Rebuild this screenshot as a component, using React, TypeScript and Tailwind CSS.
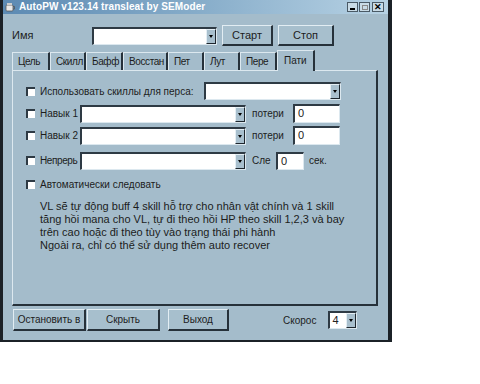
import React from "react";

const FONT = "font-['Liberation_Sans',Arial,sans-serif]";

/**
 * Combo box with the classic drop arrow
 */
const Combo = ({ className, value }: { className: string; value?: string }) => (
  <div
    className={`flex shrink-0 bg-white border-t-2 border-l-2 border-t-[#2e3a44] border-l-[#2e3a44] border-b border-r border-b-[#dce8ef] border-r-[#dce8ef] ${className}`}
  >
    <div className="flex-1 pl-[2px] text-[11px] leading-[14px] text-[#222]">{value}</div>
    <div className="w-[10px] flex items-center justify-center bg-[#a9c0ce] border-t border-l border-t-[#e4eef4] border-l-[#e4eef4] border-b border-r border-b-[#1e262d] border-r-[#1e262d]">
      <div className="w-0 h-0 border-l-[2.5px] border-r-[2.5px] border-t-[3px] border-l-transparent border-r-transparent border-t-black" />
    </div>
  </div>
);

const Field = ({ className, value }: { className: string; value: string }) => (
  <div
    className={`shrink-0 bg-white border-t-2 border-l-2 border-t-[#2e3a44] border-l-[#2e3a44] border-b border-r border-b-[#dce8ef] border-r-[#dce8ef] pl-[3px] text-[11px] leading-[14px] text-[#222] ${className}`}
  >
    {value}
  </div>
);

const Check = () => (
  <div className="w-[9px] h-[9px] bg-white border-t-2 border-l-2 border-t-[#2e3a44] border-l-[#2e3a44] shrink-0" />
);

const Btn = ({ className, children }: { className: string; children: React.ReactNode }) => (
  <div
    className={`flex shrink-0 items-center justify-center whitespace-nowrap text-[10px] text-[#1c1c1c] bg-[#a7bfcd] border-t border-l border-t-[#e2edf3] border-l-[#e2edf3] border-b-2 border-r-2 border-b-[#26313a] border-r-[#26313a] ${className}`}
  >
    {children}
  </div>
);

const TABS = ["Цель", "Скилл", "Бафф", "Восстан", "Пет", "Лут", "Пере"];
const TAB_W = ["w-[38px]", "w-[36px]", "w-[37px]", "w-[45px]", "w-[36px]", "w-[36px]", "w-[37px]"];

export default function App() {
  return (
    <div className={`w-[480px] h-[384px] bg-white ${FONT}`}>
      <div className="w-[392px] h-[342px] flex flex-col bg-[#a4bccb] border-l-[3px] border-r-[4px] border-b-2 border-[#1b2127]">
        {/* title bar */}
        <div className="h-[14px] flex items-center bg-gradient-to-r from-[#5c8ab3] via-[#86acc9] to-[#b7d2e4] pl-[2px] pr-[4px]">
          <svg width="11" height="10" viewBox="0 0 11 10" className="shrink-0">
            <rect x="1" y="3" width="7" height="6" rx="1" fill="#e8e8e8" stroke="#555" strokeWidth="0.8" />
            <path d="M8 4.5 h1.5 v2.5 h-1.5" fill="none" stroke="#555" strokeWidth="0.8" />
            <rect x="2" y="1" width="5" height="2" fill="#ccc" />
          </svg>
          <span className="ml-[3px] text-[10px] font-bold text-white tracking-[0.1px] leading-none whitespace-nowrap">
            AutoPW v123.14 transleat by SEModer
          </span>
          <div className="ml-auto flex gap-[1px]">
            <div className="w-[11px] h-[10px] bg-[#c9dbe6] border border-[#4a5a66] flex items-end justify-center pb-[1px]">
              <div className="w-[5px] h-[2px] bg-black" />
            </div>
            <div className="w-[11px] h-[10px] bg-[#c9dbe6] border border-[#4a5a66] flex items-center justify-center">
              <div className="w-[6px] h-[5px] border border-[#888]" />
            </div>
            <div className="w-[12px] h-[10px] ml-[1px] bg-[#c9dbe6] border border-[#4a5a66] flex items-center justify-center text-[9px] font-bold leading-none text-black">
              ✕
            </div>
          </div>
        </div>

        {/* name row */}
        <div className="flex items-center mt-[11px] pl-[9px] h-[21px] whitespace-nowrap">
          <span className="w-[80px] text-[11px] text-[#1c1c1c]">Имя</span>
          <Combo className="w-[125px] h-[18px]" />
          <Btn className="w-[51px] h-[21px] ml-[5px] text-[11px]">Старт</Btn>
          <Btn className="w-[56px] h-[21px] ml-[5px] text-[11px]">Стоп</Btn>
        </div>

        {/* tabs */}
        <div className="flex items-end mt-[3px] ml-[9px] h-[21px] whitespace-nowrap">
          {TABS.map((t, i) => (
            <div
              key={t}
              className={`${TAB_W[i]} h-[18px] flex items-center pl-[5px] text-[10px] tracking-[-0.4px] text-[#1c1c1c] border-t border-l border-t-[#dce8ef] border-l-[#dce8ef] border-r-2 border-r-[#26313a] overflow-hidden`}
            >
              {t}
            </div>
          ))}
          <div className="w-[38px] h-[21px] flex items-center pl-[6px] pb-[2px] text-[10px] text-[#1c1c1c] border-t border-l border-t-[#dce8ef] border-l-[#dce8ef] border-r-2 border-r-[#26313a] -mb-[1px] bg-[#a4bccb] relative">
            Пати
          </div>
        </div>

        {/* tab panel */}
        <div className="ml-[9px] w-[366px] h-[236px] border-t border-l border-t-[#dce8ef] border-l-[#dce8ef] border-b-2 border-r-2 border-b-[#26313a] border-r-[#26313a] pl-[13px] pt-[11px] text-[10px] text-[#1c1c1c] whitespace-nowrap">
          <div className="flex items-center h-[18px]">
            <Check />
            <span className="ml-[5px] w-[164px] shrink-0">Использовать скиллы для перса:</span>
            <Combo className="w-[137px] h-[18px]" />
          </div>
          <div className="flex items-center h-[19px] mt-[4px]">
            <Check />
            <span className="ml-[5px] w-[40px] shrink-0">Навык 1</span>
            <Combo className="w-[166px] h-[18px]" />
            <span className="ml-[6px] w-[41px] shrink-0">потери</span>
            <Field className="w-[47px] h-[19px]" value="0" />
          </div>
          <div className="flex items-center h-[19px] mt-[3px]">
            <Check />
            <span className="ml-[5px] w-[40px] shrink-0">Навык 2</span>
            <Combo className="w-[166px] h-[18px]" />
            <span className="ml-[6px] w-[41px] shrink-0">потери</span>
            <Field className="w-[47px] h-[19px]" value="0" />
          </div>
          <div className="flex items-center h-[19px] mt-[6px]">
            <Check />
            <span className="ml-[5px] w-[40px] shrink-0 tracking-[-0.4px]">Непрерь</span>
            <Combo className="w-[166px] h-[18px]" />
            <span className="ml-[6px] w-[24px] shrink-0">Сле</span>
            <Field className="w-[28px] h-[18px]" value="0" />
            <span className="ml-[5px]">сек.</span>
          </div>
          <div className="flex items-center h-[14px] mt-[7px]">
            <Check />
            <span className="ml-[5px]">Автоматически следовать</span>
          </div>
          <div className="mt-[9px] ml-[14px] text-[11px] leading-[13px]">
            <p>VL sẽ tự động buff 4 skill hỗ trợ cho nhân vật chính và 1 skill</p>
            <p>tăng hồi mana cho VL, tự đi theo hồi HP theo skill 1,2,3 và bay</p>
            <p>trên cao hoặc đi theo tùy vào trạng thái phi hành</p>
            <p>Ngoài ra, chỉ có thể sử dụng thêm auto recover</p>
          </div>
        </div>

        {/* bottom row */}
        <div className="flex items-center mt-[3px] ml-[10px] h-[22px] whitespace-nowrap">
          <Btn className="w-[73px] h-[22px]">Остановить в</Btn>
          <Btn className="w-[73px] h-[22px] ml-[1px]">Скрыть</Btn>
          <Btn className="w-[61px] h-[22px] ml-[8px]">Выход</Btn>
          <span className="ml-[54px] text-[10px] text-[#1c1c1c]">Скорос</span>
          <Combo className="w-[29px] h-[18px] ml-[12px]" value="4" />
        </div>
      </div>
    </div>
  );
}
